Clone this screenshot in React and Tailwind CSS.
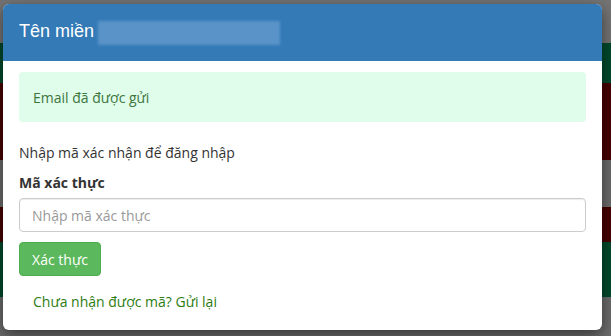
import React from "react";

const stripes = [
  { h: "h-[43px]", bg: "bg-[#747474]" },
  { h: "h-[40px]", bg: "bg-[#004a2c]" },
  { h: "h-[77px]", bg: "bg-[#470000]" },
  { h: "h-[47px]", bg: "bg-[#6c6c6c]" },
  { h: "h-[35px]", bg: "bg-[#470000]" },
  { h: "h-[55px]", bg: "bg-[#004a2c]" },
  { h: "h-[39px]", bg: "bg-[#6c6c6c]" },
];

const App = () => {
  return (
    <div className="relative w-[611px] h-[336px] overflow-hidden bg-[#6c6c6c] font-['Open_Sans',sans-serif]">
      {/* Page behind the backdrop */}
      <div className="flex flex-col">
        {stripes.map((s, i) => (
          <div key={i} className={`${s.h} ${s.bg}`} />
        ))}
      </div>

      {/* Modal */}
      <div className="absolute left-[3px] top-[4px] w-[599px] h-[326px] bg-white rounded-[6px] shadow-[0_5px_15px_rgba(0,0,0,0.5)] overflow-hidden">
        <div className="h-[57px] bg-[#337ab7] flex items-center pl-[16px] pb-[2px]">
          <span className="text-white text-[18px] font-['Liberation_Sans',sans-serif]">
            Tên miền
          </span>
          <div className="ml-[4px] mt-[3px] w-[182px] h-[24px] bg-[#5a93c7] blur-[1.5px]" />
        </div>

        <div className="px-[16px] pt-[11px]">
          {/* Alert */}
          <div className="h-[50px] rounded-[4px] bg-[#e0fcea] flex items-center px-[14px]">
            <span className="text-[14px] text-[#3c763d]">Email đã được gửi</span>
          </div>

          <p className="mt-[21px] text-[14px] leading-[20px] text-[#333]">
            Nhập mã xác nhận để đăng nhập
          </p>

          <label className="block mt-[10px] mb-[5px] text-[14px] leading-[20px] font-bold text-[#333]">
            Mã xác thực
          </label>
          <input
            type="text"
            placeholder="Nhập mã xác thực"
            className="block w-full h-[34px] px-[12px] text-[14px] border border-[#ccc] rounded-[4px] shadow-[inset_0_1px_1px_rgba(0,0,0,0.075)] placeholder:text-[#999] outline-none"
          />

          <button className="mt-[10px] h-[34px] w-[82px] rounded-[4px] bg-[#5cb85c] border border-[#4cae4c] text-white text-[14px]">
            Xác thực
          </button>

          <div className="mt-[16px] pl-[14px] text-[14px] leading-[20px] text-[#2d7c12]">
            Chưa nhận được mã? Gửi lại
          </div>
        </div>
      </div>
    </div>
  );
};

export default App;
